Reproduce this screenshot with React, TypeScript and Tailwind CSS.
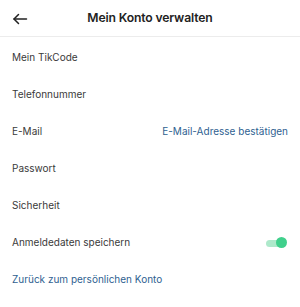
import React from "react";

const rows = [
  "Mein TikCode",
  "Telefonnummer",
  "E-Mail",
  "Passwort",
  "Sicherheit",
  "Anmeldedaten speichern",
];

export default function App() {
  return (
    <div
      className="w-[300px] h-[307px] bg-white overflow-hidden"
      style={{ fontFamily: "Inter, 'Open Sans', sans-serif" }}
    >
      <div className="relative h-[37px] border-b border-[#ececec] flex items-center justify-center">
        <svg
          className="absolute left-[12px] top-[11px]"
          width="16"
          height="16"
          viewBox="0 0 16 16"
          fill="none"
          stroke="#222"
          strokeWidth="1.5"
          strokeLinecap="round"
          strokeLinejoin="round"
        >
          <path d="M14.5 8H2" />
          <path d="M6.5 3.5L2 8l4.5 4.5" />
        </svg>
        <span className="text-[12.2px] font-semibold text-[#222] tracking-[-0.15px]">
          Mein Konto verwalten
        </span>
      </div>
      <div className="pt-[2px]">
        {rows.map((r) => (
          <div
            key={r}
            className="h-[37px] flex items-center justify-between pl-[12px] pr-[12px] text-[10px] text-[#3a3a3a]"
          >
            <span>{r}</span>
            {r === "E-Mail" && (
              <span className="text-[#2f5f91]">E-Mail-Adresse bestätigen</span>
            )}
            {r === "Anmeldedaten speichern" && (
              <div className="relative w-[21px] h-[10px] mr-[1px]">
                <div className="absolute left-0 top-[2px] w-[18px] h-[7px] rounded-full bg-[#aee9cb]" />
                <div className="absolute right-0 top-[-1px] w-[11px] h-[11px] rounded-full bg-[#40d08c]" />
              </div>
            )}
          </div>
        ))}
        <div className="h-[37px] flex items-center pl-[12px] text-[10px] text-[#2f5f91]">
          Zurück zum persönlichen Konto
        </div>
      </div>
    </div>
  );
}
